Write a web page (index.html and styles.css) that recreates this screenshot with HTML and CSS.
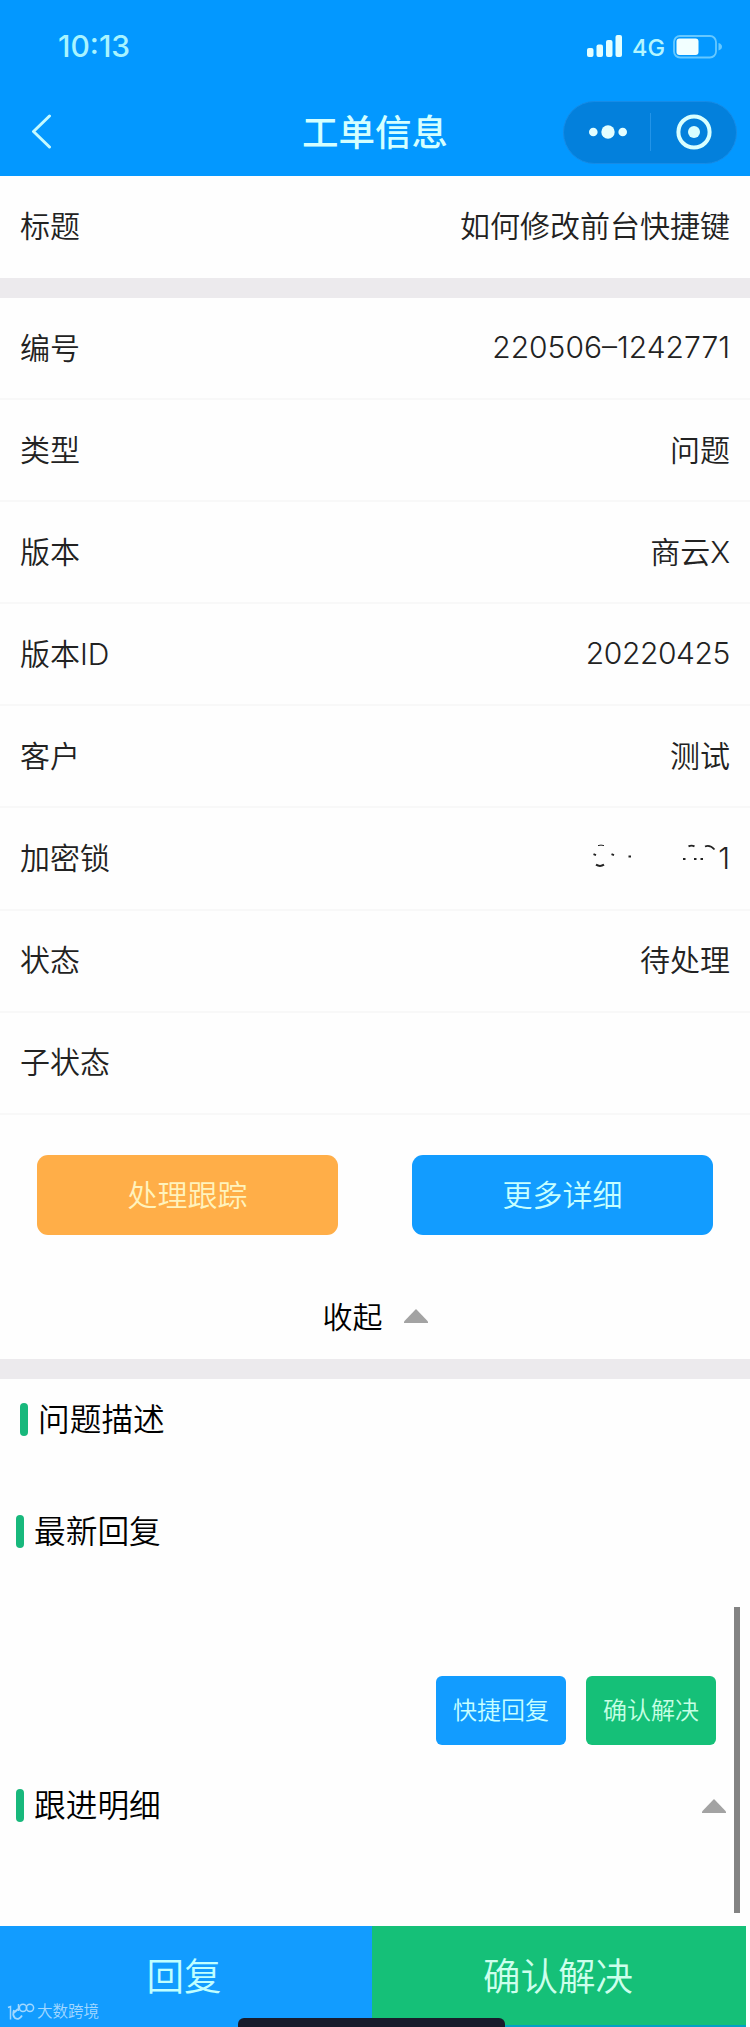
FILE: index.html
```html
<!DOCTYPE html>
<html lang="zh-CN">
<head>
  <meta charset="UTF-8" />
  <title>工单信息</title>
  <meta name="viewport" content="width=device-width, initial-scale=1.0" />
  <link rel="stylesheet" href="styles.css">
</head>
<body>
  <header class="header">
    <div class="status-bar">
      <span class="time">10:13</span>
      <div class="status-icons">
        <svg class="signal" width="36" height="22" viewBox="0 0 36 22" fill="#e4ffff">
          <rect x="0" y="13" width="6.5" height="9" rx="2" />
          <rect x="9.5" y="9.5" width="6.5" height="12.5" rx="2" />
          <rect x="19" y="5" width="6.5" height="17" rx="2" />
          <rect x="28.5" y="0" width="6.5" height="22" rx="2" />
        </svg>
        <span class="network">4G</span>
        <svg class="battery" width="50" height="24" viewBox="0 0 50 24">
          <rect x="1" y="1" width="42" height="21.5" rx="6" fill="none" stroke="#66c8ff" stroke-width="1.8" />
          <rect x="3.5" y="3.5" width="22" height="16.5" rx="3" fill="#f2ffff" />
          <path d="M45.5 8 Q49 9 49 11.8 Q49 14.5 45.5 15.5 Z" fill="#66c8ff" />
        </svg>
      </div>
    </div>
    <div class="nav-bar">
      <svg class="back" width="22" height="36" viewBox="0 0 22 36" fill="none" stroke="#c4faff" stroke-width="3" stroke-linecap="round" stroke-linejoin="round">
        <path d="M18.5 2 L2.5 17.5 L18.5 33" />
      </svg>
      <h1 class="nav-title">工单信息</h1>
      <div class="capsule">
        <svg class="more" width="40" height="16" viewBox="0 0 40 16" fill="#e4ffff">
          <circle cx="5.3" cy="8" r="4.3" />
          <circle cx="20" cy="8" r="6.7" />
          <circle cx="34.7" cy="8" r="4.3" />
        </svg>
        <span class="capsule-line"></span>
        <svg class="close" width="36" height="36" viewBox="0 0 36 36">
          <circle cx="18" cy="18" r="15.6" fill="none" stroke="#d8ffff" stroke-width="4" />
          <circle cx="18" cy="18" r="6" fill="#d8ffff" />
        </svg>
      </div>
    </div>
  </header>

  <main class="content">
    <div class="row row-title"><span>标题</span><span>如何修改前台快捷键</span></div>
    <div class="gap"></div>

    <div class="row"><span>编号</span><span class="num">220506–1242771</span></div>
    <div class="row"><span>类型</span><span>问题</span></div>
    <div class="row"><span>版本</span><span>商云X</span></div>
    <div class="row"><span>版本ID</span><span class="num num-date">20220425</span></div>
    <div class="row"><span>客户</span><span>测试</span></div>
    <div class="row">
      <span>加密锁</span>
      <span class="masked">
        <!-- what is left of the erased lock number -->
        <svg width="126" height="24" viewBox="0 0 126 24" fill="none" stroke="#222" stroke-width="1.8">
          <path d="M6 1.6 Q9 .6 12 1.6" stroke-width="1" />
          <path d="M1.5 10.2 L4 11.2 M19.5 10.2 L22 11.2" />
          <path d="M4 20.6 Q8 23.2 12 20.6" stroke-width="2" />
          <path d="M36.5 12.5 H39 M91 15 H93.5 M102 15 H104.5 M108.5 15 H111" />
          <path d="M96.5 2.4 Q99.5 .8 102.5 2.4 M113 2.5 Q118 .5 122.5 5.5" />
        </svg>
        <span class="num">1</span>
      </span>
    </div>
    <div class="row"><span>状态</span><span>待处理</span></div>
    <div class="row"><span>子状态</span><span></span></div>

    <div class="actions">
      <button class="btn btn-orange">处理跟踪</button>
      <button class="btn btn-blue">更多详细</button>
    </div>
    <div class="collapse">
      <span>收起</span>
      <svg class="arrow" width="24" height="14" viewBox="0 0 24 14"><path d="M12 0 L24 12.5 V14 H0 V12.5 Z" fill="#a3a3a3" /></svg>
    </div>
    <div class="gap"></div>

    <section class="section section-desc">
      <h2 class="section-title">问题描述</h2>
    </section>
    <section class="section section-reply">
      <h2 class="section-title">最新回复</h2>
      <div class="reply-actions">
        <button class="btn-small btn-blue">快捷回复</button>
        <button class="btn-small btn-green">确认解决</button>
      </div>
    </section>
    <section class="section section-follow">
      <h2 class="section-title">跟进明细</h2>
      <svg class="arrow" width="24" height="14" viewBox="0 0 24 14"><path d="M12 0 L24 12.5 V14 H0 V12.5 Z" fill="#a3a3a3" /></svg>
    </section>
    <div class="scrollbar"></div>
  </main>

  <footer class="footer">
    <button class="footer-btn footer-reply">回复</button>
    <button class="footer-btn footer-confirm">确认解决</button>
    <div class="bottom-line"></div>
    <div class="home-indicator"></div>
    <div class="watermark">
      <svg width="28" height="18" viewBox="0 0 28 18" fill="none" stroke="#a3d8ff" stroke-width="1.5">
        <path d="M1 4.5 L3.5 3.5 V16.5" />
        <path d="M11 6 L6 10.5 M7 7 Q5 12 8 15 Q12 17.5 15 12.5" stroke-width="1.8" />
        <path d="M11.5 1 V8" />
        <circle cx="16" cy="4.8" r="3.6" />
        <circle cx="23" cy="4.8" r="3.6" />
      </svg>
      <span>大数跨境</span>
    </div>
  </footer>
</body>
</html>
```
FILE: styles.css
```css
* {
  box-sizing: border-box;
}

body {
  margin: 0;
  width: 750px;
  height: 2027px;
  display: flex;
  flex-direction: column;
  position: relative;
  overflow: hidden;
  background: #fefefe;
  color: #222;
  font-family: Inter, "Noto Sans CJK SC", sans-serif;
  font-size: 30px;
  font-weight: 350;
}

h1, h2 {
  margin: 0;
}

button {
  border: none;
  padding: 0;
  font-family: inherit;
  font-weight: 350;
  cursor: pointer;
}

/* header */
.header {
  height: 176px;
  background: #0398ff;
}

.status-bar {
  height: 88px;
  display: flex;
  justify-content: space-between;
  padding: 26px 27px 0 58px;
}

.time {
  color: #a8f4ff;
  font-size: 30px;
  line-height: 40px;
  font-weight: 500;
}

.status-icons {
  display: flex;
  align-items: flex-start;
  padding-top: 9px;
}

.network {
  margin: 0 8px 0 9px;
  color: #b4f6ff;
  font-size: 23.5px;
  line-height: 26px;
  font-weight: 500;
}

.nav-bar {
  height: 88px;
  display: grid;
  grid-template-columns: 200px 1fr 200px;
  align-items: center;
}

.back {
  margin-left: 31px;
}

.nav-title {
  padding-top: 2px;
  text-align: center;
  color: #d4ffff;
  font-size: 36.5px;
  line-height: 50px;
  font-weight: 500;
}

.capsule {
  width: 174px;
  height: 63px;
  margin-left: 13px;
  display: flex;
  align-items: center;
  border: 1px solid #168be6;
  border-radius: 32px;
  background: #0380dc;
}

.more {
  margin-left: 24px;
}

.capsule-line {
  width: 1px;
  height: 38px;
  margin: 0 25px 0 22px;
  background: #2394e8;
}

/* detail rows */
.content {
  height: 1750px;
  position: relative;
}

.row {
  height: 102.1px;
  display: flex;
  justify-content: space-between;
  align-items: center;
  padding: 0 20px 5px 20px;
  border-bottom: 2px solid #f8f8f8;
}

.row-title {
  height: 102px;
  padding-bottom: 7px;
  border-bottom: none;
}

.gap {
  height: 20px;
  background: #eceaed;
}

.num {
  padding-top: 3px;
}

.num-date {
  letter-spacing: -0.4px;
}

.masked {
  display: flex;
  align-items: center;
}

.actions {
  height: 120px;
  display: flex;
  justify-content: space-between;
  padding: 40px 37px 0;
}

.btn {
  width: 301px;
  height: 80px;
  padding-bottom: 4px;
  border-radius: 11px;
  font-size: 30px;
}

.btn-orange {
  background: #ffae48;
  color: #fff3bd;
}

.btn-blue {
  background: #129cff;
  color: #c6ffff;
}

.btn-green {
  background: #15c078;
  color: #c5ffe4;
}

.collapse {
  height: 124px;
  display: flex;
  justify-content: center;
  align-items: center;
  gap: 21px;
  padding-top: 39px;
  color: #000;
}

.collapse span {
  padding-bottom: 3px;
}

/* sections */
.section {
  color: #000;
}

.section-title {
  display: flex;
  align-items: center;
  gap: 10px;
  font-size: 31.7px;
  line-height: 44px;
  font-weight: 350;
}

.section-title::before {
  content: "";
  width: 8px;
  height: 33px;
  border-radius: 4px;
  background: #18b87c;
}

.section-desc {
  height: 112px;
  padding: 19px 20px 0;
}

.section-reply {
  height: 274px;
  padding: 19px 16px 0;
}

.reply-actions {
  display: flex;
  justify-content: flex-end;
  gap: 20px;
  padding: 122px 18px 0 0;
}

.btn-small {
  width: 130px;
  height: 69px;
  padding-bottom: 3px;
  border-radius: 6px;
  font-size: 24px;
}

.section-follow {
  display: flex;
  justify-content: space-between;
  align-items: center;
  padding: 19px 24px 0 16px;
}

.scrollbar {
  position: absolute;
  top: 1431px;
  right: 10px;
  width: 6px;
  height: 306px;
  background: #838383;
}

/* footer */
.footer {
  height: 101px;
  display: grid;
  grid-template-columns: 372px 374px;
  position: relative;
}

.footer-btn {
  padding-bottom: 6px;
  font-size: 37.5px;
}

.footer-reply {
  background: #129cff;
  color: #c0ffff;
  padding-right: 4px;
}

.footer-confirm {
  background: #15c078;
  color: #cdffec;
  padding-right: 2px;
}

.bottom-line {
  position: absolute;
  left: 504px;
  right: 4px;
  bottom: 0;
  height: 2px;
  background: #00a2c4;
}

.home-indicator {
  position: absolute;
  left: 238px;
  bottom: 0;
  width: 267px;
  height: 9px;
  border-radius: 6px 6px 0 0;
  background: #181c2c;
}

.watermark {
  position: absolute;
  left: 7px;
  bottom: 4px;
  display: flex;
  align-items: center;
  gap: 2px;
  color: #a3d8ff;
  font-size: 15.5px;
  line-height: 22px;
}
```
